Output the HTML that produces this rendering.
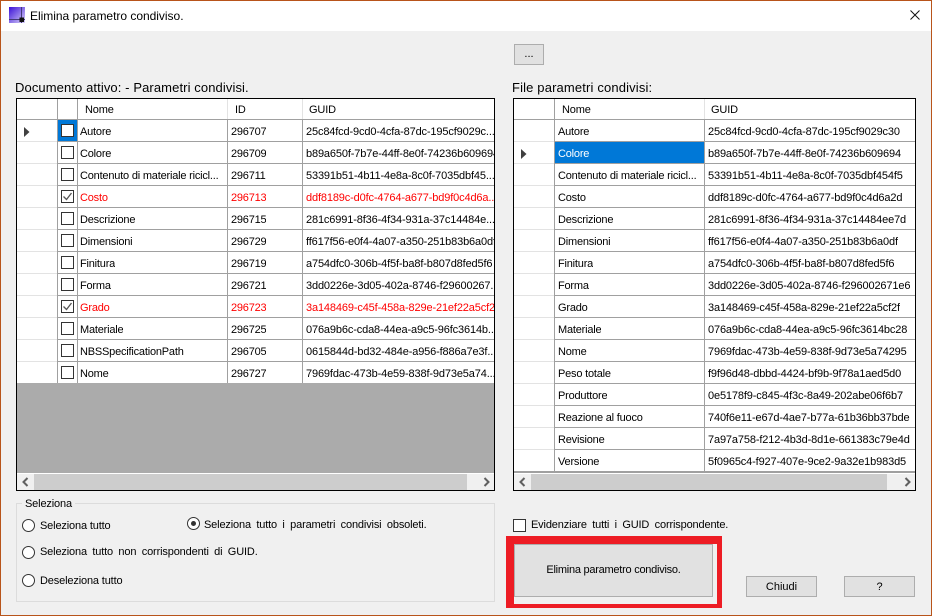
<!DOCTYPE html>
<html><head><meta charset="utf-8"><style>
html,body{margin:0;padding:0}
body{width:932px;height:616px;overflow:hidden;position:relative;background:#f0f0f0;font-family:"Liberation Sans",sans-serif;font-size:11px;color:#000}
div,span{position:absolute;box-sizing:border-box;white-space:nowrap}
.frame{left:0;top:0;width:932px;height:616px;border:1px solid #b8541a;z-index:50;pointer-events:none}
.grid{background:#fff;border:1px solid #000}
.gray{background:#ababab}
.t{line-height:24px;height:22px;overflow:hidden;letter-spacing:-.2px}
.t[style*="left:231px"]{letter-spacing:-.22px}
.t[style*="left:306px"],.t[style*="left:708px"]{letter-spacing:-.14px}
.h{line-height:22px;height:20px;letter-spacing:-.15px}
.hl{height:1px;background:#a0a0a0}
.vl{width:1px;background:#a0a0a0}
.sl{height:1px;background:#e3e3e3}
.r{color:#ff0000}
.cb{width:13px;height:13px;border:1px solid #333;background:#fff}
.sb{background:#cdcdcd;height:16px}
.sbb{background:#f0f0f0;height:16px}
.rad{width:13px;height:13px;border:1px solid #333;border-radius:50%;background:#fff}
.btn{background:#e1e1e1;border:1px solid #adadad;text-align:center}
.lab{font-size:11px;line-height:14px;letter-spacing:-.15px}
.ws{word-spacing:2.5px}
</style></head><body>
<div style="left:0;top:0;width:932px;height:31px;background:#fff"></div>
<svg style="position:absolute;left:9px;top:7px" width="16" height="16" viewBox="0 0 16 16"><defs><linearGradient id="g" x1="0" y1="0" x2="1" y2="1"><stop offset="0" stop-color="#3a10d8"/><stop offset="1" stop-color="#d8d0f8"/></linearGradient></defs><rect width="16" height="16" fill="url(#g)"/><path d="M0 12.5H16M12.5 0V16" stroke="#443a78" stroke-width="1"/><rect x="10.500" y="10.500" width="4.500" height="4.500" fill="#111"/></svg>
<div style="left:30px;top:9px;font-size:12px;line-height:14px;letter-spacing:-.02px">Elimina parametro condiviso.</div>
<svg style="position:absolute;left:910px;top:10px" width="10" height="10" viewBox="0 0 10 10"><path d="M.5.5L9.500 9.500M9.500.5L.5 9.500" stroke="#111" stroke-width="1"/></svg>

<div class="btn" style="left:514px;top:44px;width:30px;height:21px;line-height:19px">...</div>
<div style="left:15px;top:80px;font-size:13px;line-height:15px;letter-spacing:.1px">Documento attivo: - Parametri condivisi.</div>
<div style="left:512px;top:80px;font-size:13px;line-height:15px;letter-spacing:.15px">File parametri condivisi:</div>

<!-- left grid -->
<div class="grid" style="left:16px;top:98px;width:479px;height:393px"></div>
<div class="gray" style="left:17px;top:383px;width:477px;height:90px"></div>
<div class="vl" style="left:57px;top:99px;height:284px"></div>
<div class="vl" style="left:77px;top:99px;height:284px"></div>
<div class="vl" style="left:227px;top:120px;height:263px"></div>
<div class="vl" style="left:302px;top:120px;height:263px"></div>
<div class="vl" style="left:227px;top:99px;height:20px;background:#e3e3e3"></div>
<div class="vl" style="left:302px;top:99px;height:20px;background:#e3e3e3"></div>
<div class="hl" style="left:17px;top:119px;width:477px"></div>
<div class="hl" style="left:58px;top:141px;width:436px"></div><div class="sl" style="left:17px;top:141px;width:40px"></div>
<div class="hl" style="left:58px;top:163px;width:436px"></div><div class="sl" style="left:17px;top:163px;width:40px"></div>
<div class="hl" style="left:58px;top:185px;width:436px"></div><div class="sl" style="left:17px;top:185px;width:40px"></div>
<div class="hl" style="left:58px;top:207px;width:436px"></div><div class="sl" style="left:17px;top:207px;width:40px"></div>
<div class="hl" style="left:58px;top:229px;width:436px"></div><div class="sl" style="left:17px;top:229px;width:40px"></div>
<div class="hl" style="left:58px;top:251px;width:436px"></div><div class="sl" style="left:17px;top:251px;width:40px"></div>
<div class="hl" style="left:58px;top:273px;width:436px"></div><div class="sl" style="left:17px;top:273px;width:40px"></div>
<div class="hl" style="left:58px;top:295px;width:436px"></div><div class="sl" style="left:17px;top:295px;width:40px"></div>
<div class="hl" style="left:58px;top:317px;width:436px"></div><div class="sl" style="left:17px;top:317px;width:40px"></div>
<div class="hl" style="left:58px;top:339px;width:436px"></div><div class="sl" style="left:17px;top:339px;width:40px"></div>
<div class="hl" style="left:58px;top:361px;width:436px"></div><div class="sl" style="left:17px;top:361px;width:40px"></div>
<div class="h" style="left:85px;top:99px">Nome</div>
<div class="h" style="left:235px;top:99px">ID</div>
<div class="h" style="left:309px;top:99px">GUID</div>
<div style="left:58px;top:120px;width:19px;height:21px;background:#0078d7"></div>
<svg style="position:absolute;left:24px;top:127px" width="6" height="10"><path d="M0 0L5.500 5L0 10Z" fill="#404040"/></svg>

<div class="cb" style="left:61px;top:124px"></div>
<div class="cb" style="left:61px;top:146px"></div>
<div class="cb" style="left:61px;top:168px"></div>
<div class="cb" style="left:61px;top:190px"></div>
<div class="cb" style="left:61px;top:212px"></div>
<div class="cb" style="left:61px;top:234px"></div>
<div class="cb" style="left:61px;top:256px"></div>
<div class="cb" style="left:61px;top:278px"></div>
<div class="cb" style="left:61px;top:300px"></div>
<div class="cb" style="left:61px;top:322px"></div>
<div class="cb" style="left:61px;top:344px"></div>
<div class="cb" style="left:61px;top:366px"></div>
<svg style="position:absolute;left:61px;top:190px" width="13" height="13"><path d="M2.500 6.500L5.500 9.500L10.500 3" fill="none" stroke="#555" stroke-width="1.300"/></svg>
<svg style="position:absolute;left:61px;top:300px" width="13" height="13"><path d="M2.500 6.500L5.500 9.500L10.500 3" fill="none" stroke="#555" stroke-width="1.300"/></svg>

<div class="t" style="left:80px;top:120px">Autore</div><div class="t" style="left:231px;top:120px">296707</div><div class="t" style="left:306px;top:120px;width:188px">25c84fcd-9cd0-4cfa-87dc-195cf9029c...</div>
<div class="t" style="left:80px;top:142px">Colore</div><div class="t" style="left:231px;top:142px">296709</div><div class="t" style="left:306px;top:142px;width:188px">b89a650f-7b7e-44ff-8e0f-74236b609694</div>
<div class="t" style="left:80px;top:164px">Contenuto di materiale ricicl...</div><div class="t" style="left:231px;top:164px">296711</div><div class="t" style="left:306px;top:164px;width:188px">53391b51-4b11-4e8a-8c0f-7035dbf45...</div>
<div class="t r" style="left:80px;top:186px">Costo</div><div class="t r" style="left:231px;top:186px">296713</div><div class="t r" style="left:306px;top:186px;width:188px">ddf8189c-d0fc-4764-a677-bd9f0c4d6a...</div>
<div class="t" style="left:80px;top:208px">Descrizione</div><div class="t" style="left:231px;top:208px">296715</div><div class="t" style="left:306px;top:208px;width:188px">281c6991-8f36-4f34-931a-37c14484e...</div>
<div class="t" style="left:80px;top:230px">Dimensioni</div><div class="t" style="left:231px;top:230px">296729</div><div class="t" style="left:306px;top:230px;width:188px">ff617f56-e0f4-4a07-a350-251b83b6a0df</div>
<div class="t" style="left:80px;top:252px">Finitura</div><div class="t" style="left:231px;top:252px">296719</div><div class="t" style="left:306px;top:252px;width:188px">a754dfc0-306b-4f5f-ba8f-b807d8fed5f6</div>
<div class="t" style="left:80px;top:274px">Forma</div><div class="t" style="left:231px;top:274px">296721</div><div class="t" style="left:306px;top:274px;width:188px">3dd0226e-3d05-402a-8746-f29600267...</div>
<div class="t r" style="left:80px;top:296px">Grado</div><div class="t r" style="left:231px;top:296px">296723</div><div class="t r" style="left:306px;top:296px;width:188px">3a148469-c45f-458a-829e-21ef22a5cf2f</div>
<div class="t" style="left:80px;top:318px">Materiale</div><div class="t" style="left:231px;top:318px">296725</div><div class="t" style="left:306px;top:318px;width:188px">076a9b6c-cda8-44ea-a9c5-96fc3614b...</div>
<div class="t" style="left:80px;top:340px">NBSSpecificationPath</div><div class="t" style="left:231px;top:340px">296705</div><div class="t" style="left:306px;top:340px;width:188px">0615844d-bd32-484e-a956-f886a7e3f...</div>
<div class="t" style="left:80px;top:362px">Nome</div><div class="t" style="left:231px;top:362px">296727</div><div class="t" style="left:306px;top:362px;width:188px">7969fdac-473b-4e59-838f-9d73e5a74...</div>

<div class="sbb" style="left:17px;top:474px;width:17px"></div>
<div class="sb" style="left:34px;top:474px;width:433px"></div>
<div class="sbb" style="left:467px;top:474px;width:27px"></div>
<svg style="position:absolute;left:22px;top:477px" width="7" height="10"><path d="M5.500 1L1.500 5L5.500 9" fill="none" stroke="#606060" stroke-width="2"/></svg>
<svg style="position:absolute;left:483px;top:477px" width="7" height="10"><path d="M1.500 1L5.500 5L1.500 9" fill="none" stroke="#606060" stroke-width="2"/></svg>

<!-- right grid -->
<div class="grid" style="left:513px;top:98px;width:403px;height:393px"></div>
<div class="gray" style="left:514px;top:471px;width:401px;height:2px;background:#a0a0a0"></div>
<div class="vl" style="left:554px;top:99px;height:373px"></div>
<div class="vl" style="left:704px;top:120px;height:352px"></div>
<div class="vl" style="left:704px;top:99px;height:20px;background:#e3e3e3"></div>
<div class="hl" style="left:514px;top:119px;width:401px"></div>
<div class="hl" style="left:555px;top:141px;width:360px"></div><div class="sl" style="left:514px;top:141px;width:40px"></div>
<div class="hl" style="left:555px;top:163px;width:360px"></div><div class="sl" style="left:514px;top:163px;width:40px"></div>
<div class="hl" style="left:555px;top:185px;width:360px"></div><div class="sl" style="left:514px;top:185px;width:40px"></div>
<div class="hl" style="left:555px;top:207px;width:360px"></div><div class="sl" style="left:514px;top:207px;width:40px"></div>
<div class="hl" style="left:555px;top:229px;width:360px"></div><div class="sl" style="left:514px;top:229px;width:40px"></div>
<div class="hl" style="left:555px;top:251px;width:360px"></div><div class="sl" style="left:514px;top:251px;width:40px"></div>
<div class="hl" style="left:555px;top:273px;width:360px"></div><div class="sl" style="left:514px;top:273px;width:40px"></div>
<div class="hl" style="left:555px;top:295px;width:360px"></div><div class="sl" style="left:514px;top:295px;width:40px"></div>
<div class="hl" style="left:555px;top:317px;width:360px"></div><div class="sl" style="left:514px;top:317px;width:40px"></div>
<div class="hl" style="left:555px;top:339px;width:360px"></div><div class="sl" style="left:514px;top:339px;width:40px"></div>
<div class="hl" style="left:555px;top:361px;width:360px"></div><div class="sl" style="left:514px;top:361px;width:40px"></div>
<div class="hl" style="left:555px;top:383px;width:360px"></div><div class="sl" style="left:514px;top:383px;width:40px"></div>
<div class="hl" style="left:555px;top:405px;width:360px"></div><div class="sl" style="left:514px;top:405px;width:40px"></div>
<div class="hl" style="left:555px;top:427px;width:360px"></div><div class="sl" style="left:514px;top:427px;width:40px"></div>
<div class="hl" style="left:555px;top:449px;width:360px"></div><div class="sl" style="left:514px;top:449px;width:40px"></div>
<div class="h" style="left:562px;top:99px">Nome</div>
<div class="h" style="left:711px;top:99px">GUID</div>
<div style="left:555px;top:142px;width:149px;height:21px;background:#0078d7"></div>
<svg style="position:absolute;left:521px;top:149px" width="6" height="10"><path d="M0 0L5.500 5L0 10Z" fill="#404040"/></svg>

<div class="t" style="left:558px;top:120px">Autore</div><div class="t" style="left:708px;top:120px">25c84fcd-9cd0-4cfa-87dc-195cf9029c30</div>
<div class="t" style="left:558px;top:142px;color:#fff">Colore</div><div class="t" style="left:708px;top:142px">b89a650f-7b7e-44ff-8e0f-74236b609694</div>
<div class="t" style="left:558px;top:164px">Contenuto di materiale ricicl...</div><div class="t" style="left:708px;top:164px">53391b51-4b11-4e8a-8c0f-7035dbf454f5</div>
<div class="t" style="left:558px;top:186px">Costo</div><div class="t" style="left:708px;top:186px">ddf8189c-d0fc-4764-a677-bd9f0c4d6a2d</div>
<div class="t" style="left:558px;top:208px">Descrizione</div><div class="t" style="left:708px;top:208px">281c6991-8f36-4f34-931a-37c14484ee7d</div>
<div class="t" style="left:558px;top:230px">Dimensioni</div><div class="t" style="left:708px;top:230px">ff617f56-e0f4-4a07-a350-251b83b6a0df</div>
<div class="t" style="left:558px;top:252px">Finitura</div><div class="t" style="left:708px;top:252px">a754dfc0-306b-4f5f-ba8f-b807d8fed5f6</div>
<div class="t" style="left:558px;top:274px">Forma</div><div class="t" style="left:708px;top:274px">3dd0226e-3d05-402a-8746-f296002671e6</div>
<div class="t" style="left:558px;top:296px">Grado</div><div class="t" style="left:708px;top:296px">3a148469-c45f-458a-829e-21ef22a5cf2f</div>
<div class="t" style="left:558px;top:318px">Materiale</div><div class="t" style="left:708px;top:318px">076a9b6c-cda8-44ea-a9c5-96fc3614bc28</div>
<div class="t" style="left:558px;top:340px">Nome</div><div class="t" style="left:708px;top:340px">7969fdac-473b-4e59-838f-9d73e5a74295</div>
<div class="t" style="left:558px;top:362px">Peso totale</div><div class="t" style="left:708px;top:362px">f9f96d48-dbbd-4424-bf9b-9f78a1aed5d0</div>
<div class="t" style="left:558px;top:384px">Produttore</div><div class="t" style="left:708px;top:384px">0e5178f9-c845-4f3c-8a49-202abe06f6b7</div>
<div class="t" style="left:558px;top:406px">Reazione al fuoco</div><div class="t" style="left:708px;top:406px">740f6e11-e67d-4ae7-b77a-61b36bb37bde</div>
<div class="t" style="left:558px;top:428px">Revisione</div><div class="t" style="left:708px;top:428px">7a97a758-f212-4b3d-8d1e-661383c79e4d</div>
<div class="t" style="left:558px;top:450px">Versione</div><div class="t" style="left:708px;top:450px">5f0965c4-f927-407e-9ce2-9a32e1b983d5</div>

<div class="sbb" style="left:514px;top:474px;width:17px"></div>
<div class="sb" style="left:531px;top:474px;width:356px"></div>
<div class="sbb" style="left:887px;top:474px;width:28px"></div>
<svg style="position:absolute;left:519px;top:477px" width="7" height="10"><path d="M5.500 1L1.500 5L5.500 9" fill="none" stroke="#606060" stroke-width="2"/></svg>
<svg style="position:absolute;left:904px;top:477px" width="7" height="10"><path d="M1.500 1L5.500 5L1.500 9" fill="none" stroke="#606060" stroke-width="2"/></svg>

<!-- group -->
<div style="left:16px;top:503px;width:479px;height:99px;border:1px solid #dcdcdc"></div>
<div class="lab" style="left:22px;top:497px;padding:0 3px;background:#f0f0f0">Seleziona</div>
<div class="rad" style="left:22px;top:519px"></div>
<div class="lab" style="left:40px;top:519px">Seleziona tutto</div>
<div class="rad" style="left:187px;top:517px"></div>
<div style="left:191px;top:521px;width:5px;height:5px;border-radius:50%;background:#333"></div>
<div class="lab ws" style="left:204px;top:518px">Seleziona tutto i parametri condivisi obsoleti.</div>
<div class="rad" style="left:22px;top:546px"></div>
<div class="lab ws" style="left:40px;top:545px">Seleziona tutto non corrispondenti di GUID.</div>
<div class="rad" style="left:22px;top:574px"></div>
<div class="lab" style="left:40px;top:574px">Deseleziona tutto</div>

<div class="cb" style="left:513px;top:519px"></div>
<div class="lab ws" style="left:531px;top:518px">Evidenziare tutti i GUID corrispondente.</div>

<div style="left:506px;top:536px;width:216px;height:72px;border:solid #ed1c24;border-width:8px 5px 4px 8px"></div>
<div class="btn" style="left:514px;top:544px;width:199px;height:53px;line-height:51px;letter-spacing:-.25px">Elimina parametro condiviso.</div>
<div class="btn" style="left:746px;top:576px;width:71px;height:21px;line-height:20px">Chiudi</div>
<div class="btn" style="left:844px;top:576px;width:71px;height:21px;line-height:20px">?</div>
<div class="frame"></div>
</body></html>
